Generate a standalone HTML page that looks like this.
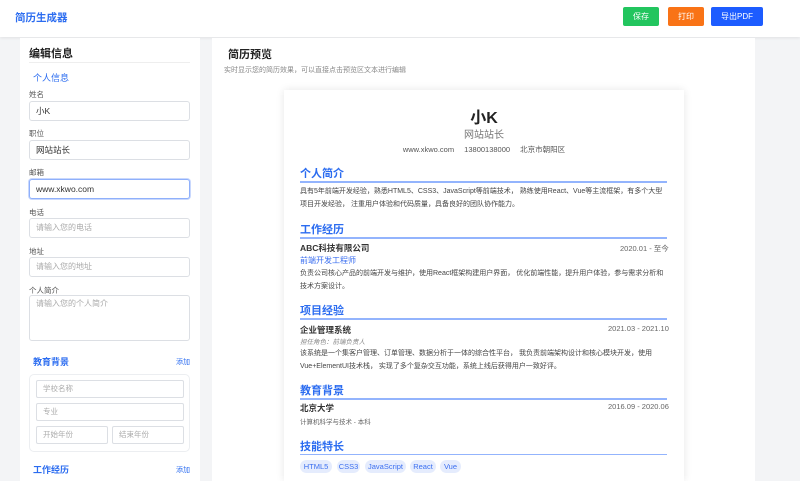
<!DOCTYPE html>
<html><head><meta charset="utf-8"><style>
*{box-sizing:border-box;margin:0;padding:0}
html,body{width:800px;height:481px;overflow:hidden}
body{background:#f3f4f6;font-family:"Liberation Sans","Noto Sans CJK SC",sans-serif;position:relative;color:#333}
.a{position:absolute;white-space:nowrap}
.hdr{left:0;top:0;width:800px;height:37px;background:#fff;box-shadow:0 1px 3px rgba(0,0,0,.08)}
.btn{top:7px;height:19px;border-radius:2px;color:#fff;font-size:8px;line-height:19px;text-align:center}
.lbl{left:29px;font-size:7.5px;color:#555}
.in{left:29px;width:161px;height:20px;border:1px solid #dcdfe4;border-radius:3px;font-size:8.5px;line-height:18px;padding-left:6px;color:#333;background:#fff}
.ph{color:#aaa;font-size:8px}
.sin{height:18px;border:1px solid #dcdfe4;border-radius:2px;font-size:7.5px;color:#aaa;line-height:16px;padding-left:6px;background:#fff}
.h{left:300px;font-size:11px;font-weight:bold;color:#2b6cf0}
.ln{left:300px;width:367px;height:2px;background:#93b4fd}
.t{font-size:7px;color:#444}
.tag{top:460px;height:13px;border-radius:7px;background:#e5ecfd;color:#3b6ff0;font-size:7.5px;line-height:13px;text-align:center}
</style></head><body>
<div class="a hdr"></div>
<div class="a" style="left:15px;top:10px;font-size:10.5px;font-weight:bold;color:#2b6cf0">简历生成器</div>
<div class="a btn" style="left:623px;width:36px;background:#22c55e">保存</div>
<div class="a btn" style="left:668px;width:36px;background:#f97316">打印</div>
<div class="a btn" style="left:711px;width:52px;background:#1d5cff">导出PDF</div>

<div class="a" style="left:20px;top:38px;width:180px;height:443px;background:#fff"></div>
<div class="a" style="left:29px;top:45px;font-size:11px;font-weight:bold;color:#222">编辑信息</div>
<div class="a" style="left:29px;top:62px;width:161px;height:1px;background:#eee"></div>
<div class="a" style="left:33px;top:71px;font-size:9px;color:#2b6cf0">个人信息</div>
<div class="a lbl" style="top:89px">姓名</div><div class="a in" style="top:101px">小K</div>
<div class="a lbl" style="top:128px">职位</div><div class="a in" style="top:140px">网站站长</div>
<div class="a lbl" style="top:167px">邮箱</div><div class="a in" style="top:179px;border-color:#8fb0fb;box-shadow:0 0 0 1px #c9d8fd">www.xkwo.com</div>
<div class="a lbl" style="top:207px">电话</div><div class="a in ph" style="top:218px">请输入您的电话</div>
<div class="a lbl" style="top:246px">地址</div><div class="a in ph" style="top:257px">请输入您的地址</div>
<div class="a lbl" style="top:285px">个人简介</div><div class="a in ph" style="top:295px;height:46px;line-height:16px">请输入您的个人简介</div>
<div class="a" style="left:33px;top:355px;font-size:9px;font-weight:bold;color:#2b6cf0">教育背景</div>
<div class="a" style="left:176px;top:357px;font-size:7px;color:#2b6cf0">添加</div>
<div class="a" style="left:29px;top:374px;width:161px;height:78px;border:1px solid #eceef1;border-radius:5px"></div>
<div class="a sin" style="left:36px;top:380px;width:148px">学校名称</div>
<div class="a sin" style="left:36px;top:403px;width:148px">专业</div>
<div class="a sin" style="left:36px;top:426px;width:72px">开始年份</div>
<div class="a sin" style="left:112px;top:426px;width:72px">结束年份</div>
<div class="a" style="left:33px;top:463px;font-size:9px;font-weight:bold;color:#2b6cf0">工作经历</div>
<div class="a" style="left:176px;top:465px;font-size:7px;color:#2b6cf0">添加</div>

<div class="a" style="left:212px;top:38px;width:543px;height:443px;background:#fff"></div>
<div class="a" style="left:228px;top:46px;font-size:11px;font-weight:bold;color:#222">简历预览</div>
<div class="a" style="left:224px;top:65px;font-size:7px;color:#888">实时显示您的简历效果，可以直接点击预览区文本进行编辑</div>
<div class="a" style="left:284px;top:90px;width:400px;height:391px;background:#fff;box-shadow:0 0 8px rgba(0,0,0,.1)"></div>
<div class="a" style="left:284px;width:400px;top:104px;text-align:center;font-size:16px;font-weight:bold;color:#222">小K</div>
<div class="a" style="left:284px;width:400px;top:126px;text-align:center;font-size:10px;color:#777">网站站长</div>
<div class="a" style="left:284px;width:400px;top:144px;text-align:center;font-size:7.5px;color:#555;word-spacing:8px">www.xkwo.com 13800138000 北京市朝阳区</div>
<div class="a h" style="top:165px">个人简介</div><div class="a ln" style="top:181px"></div>
<div class="a t" style="left:300px;top:186px;line-height:12.5px">具有5年前端开发经验，熟悉HTML5、CSS3、JavaScript等前端技术， 熟练使用React、Vue等主流框架，有多个大型<br>项目开发经验， 注重用户体验和代码质量，具备良好的团队协作能力。</div>
<div class="a h" style="top:221px">工作经历</div><div class="a ln" style="top:237px"></div>
<div class="a" style="left:300px;top:242px;font-size:8.5px;font-weight:bold;color:#333">ABC科技有限公司</div>
<div class="a t" style="left:620px;top:243px;font-size:7.5px;color:#666">2020.01 - 至今</div>
<div class="a" style="left:300px;top:255px;font-size:8px;color:#3b6ff0">前端开发工程师</div>
<div class="a t" style="left:300px;top:268px;line-height:12.5px">负责公司核心产品的前端开发与维护，使用React框架构建用户界面， 优化前端性能，提升用户体验，参与需求分析和<br>技术方案设计。</div>
<div class="a h" style="top:302px">项目经验</div><div class="a ln" style="top:318px"></div>
<div class="a" style="left:300px;top:324px;font-size:8.5px;font-weight:bold;color:#333">企业管理系统</div>
<div class="a t" style="left:608px;top:324px;font-size:7.5px;color:#666">2021.03 - 2021.10</div>
<div class="a t" style="left:300px;top:336px;font-style:italic;color:#888;font-size:6.5px">担任角色：前端负责人</div>
<div class="a t" style="left:300px;top:348px;line-height:12.5px">该系统是一个集客户管理、订单管理、数据分析于一体的综合性平台， 我负责前端架构设计和核心模块开发，使用<br>Vue+ElementUI技术栈， 实现了多个复杂交互功能，系统上线后获得用户一致好评。</div>
<div class="a h" style="top:382px">教育背景</div><div class="a ln" style="top:398px"></div>
<div class="a" style="left:300px;top:402px;font-size:8.5px;font-weight:bold;color:#333">北京大学</div>
<div class="a t" style="left:608px;top:402px;font-size:7.5px;color:#666">2016.09 - 2020.06</div>
<div class="a t" style="left:300px;top:416px;font-size:6.5px;color:#666">计算机科学与技术 - 本科</div>
<div class="a h" style="top:438px">技能特长</div><div class="a ln" style="top:454px;height:1px"></div>
<div class="a tag" style="left:300px;width:32px">HTML5</div>
<div class="a tag" style="left:337px;width:23px">CSS3</div>
<div class="a tag" style="left:365px;width:41px">JavaScript</div>
<div class="a tag" style="left:410px;width:26px">React</div>
<div class="a tag" style="left:440px;width:21px">Vue</div>
</body></html>
